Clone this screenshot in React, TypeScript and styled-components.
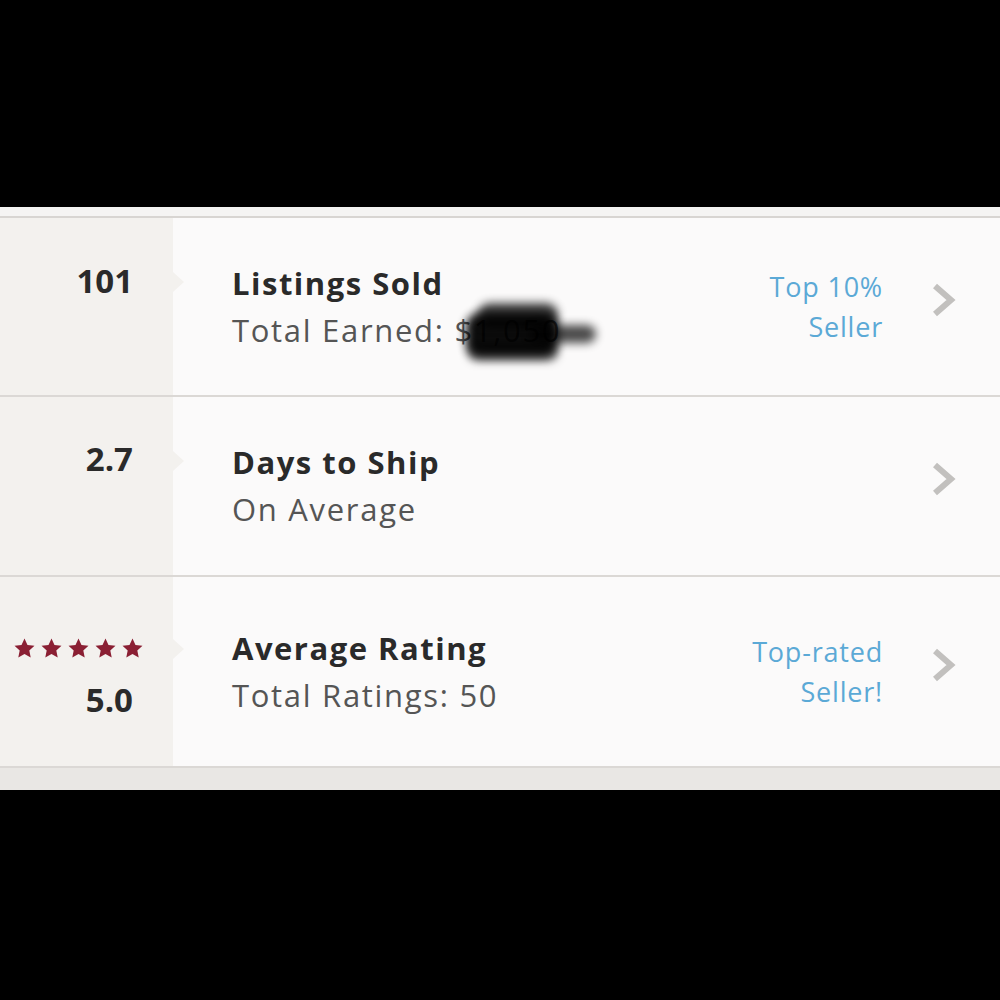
import styled, { createGlobalStyle } from 'styled-components'

const GlobalStyle = createGlobalStyle`
    html, body {
        margin: 0;
        padding: 0;
        background: #000;
    }
    body {
        font-family: "Open Sans", Lato, sans-serif;
    }
`

const Screen = styled.div`
    width: 1000px;
    height: 1000px;
    background: #000;
    display: flex;
    flex-direction: column;
    padding-top: 207px;
    box-sizing: border-box;
`

const TopStrip = styled.div`
    height: 9px;
    background: #f5f4f3;
    border-bottom: 2px solid #d8d5d2;
`

const Row = styled.div<{ $height: number }>`
    display: grid;
    grid-template-columns: 173px 1fr;
    height: ${p => p.$height}px;
    border-bottom: 2px solid #dbd8d5;
`

const StatCell = styled.div<{ $top: number }>`
    position: relative;
    background: #f3f1ee;
    display: flex;
    flex-direction: column;
    align-items: flex-end;
    padding: ${p => p.$top}px 40px 0 0;
`

const Notch = styled.div<{ $top: number }>`
    position: absolute;
    right: -11px;
    top: ${p => p.$top}px;
    width: 0;
    height: 0;
    border-top: 10px solid transparent;
    border-bottom: 10px solid transparent;
    border-left: 11px solid #f3f1ee;
`

const StatValue = styled.div`
    font-size: 33px;
    font-weight: 700;
    line-height: 40px;
    color: #2a2a2a;
`

const Stars = styled.div`
    display: flex;
    gap: 6px;
    margin: 0 -10px 21px 0;
    svg {
        width: 21px;
        height: 21px;
        fill: #8a1f33;
    }
`

const Body = styled.div`
    background: #fbfafa;
    display: flex;
    align-items: center;
    padding: 0 43px 0 59px;
`

const Titles = styled.div`
    flex: 1;
    display: flex;
    flex-direction: column;
`

const Title = styled.div`
    font-size: 31px;
    font-weight: 700;
    line-height: 47px;
    letter-spacing: 1.5px;
    color: #2a2a2a;
`

const Subtitle = styled.div`
    font-size: 31px;
    line-height: 47px;
    letter-spacing: 1.7px;
    color: #555;
`

const Redacted = styled.span`
    position: relative;
`

const Scribble = styled.span<{ $l: number; $t: number; $w: number; $h: number; $o: number }>`
    position: absolute;
    left: ${p => p.$l}px;
    top: ${p => p.$t}px;
    width: ${p => p.$w}px;
    height: ${p => p.$h}px;
    background: #000;
    opacity: ${p => p.$o};
    border-radius: 14px;
    filter: blur(5px);
`

const Badge = styled.div`
    font-size: 27px;
    line-height: 40px;
    letter-spacing: 0.8px;
    color: #5ba9d6;
    text-align: right;
    margin-right: 48px;
`

const Chevron = styled.svg`
    width: 26px;
    height: 34px;
    margin-top: -14px;
    flex-shrink: 0;
`

const BottomStrip = styled.div`
    height: 22px;
    background: #e9e7e4;
`

const Star = () => (
    <svg viewBox="0 0 24 24">
        <path d="M12 .6l3.4 7.3 8 .9-5.9 5.5 1.6 7.9L12 18.2l-7.1 4 1.6-7.9L.6 8.8l8-.9z" />
    </svg>
)

const Arrow = () => (
    <Chevron viewBox="0 0 26 34">
        <polyline points="4,3 20,17 4,31" fill="none" stroke="#c2c0be" strokeWidth="6" />
    </Chevron>
)

const App = () => {
    return (
        <>
            <GlobalStyle />
            <Screen>
                <TopStrip />
                <Row $height={177}>
                    <StatCell $top={43}>
                        <StatValue>101</StatValue>
                        <Notch $top={54} />
                    </StatCell>
                    <Body>
                        <Titles>
                            <Title>Listings Sold</Title>
                            <Subtitle>
                                Total Earned:{' '}
                                <Redacted>
                                    $1,050
                                    <Scribble $l={12} $t={4} $w={92} $h={44} $o={0.95} />
                                    <Scribble $l={24} $t={-6} $w={80} $h={24} $o={0.75} />
                                    <Scribble $l={76} $t={16} $w={66} $h={18} $o={0.7} />
                                    <Scribble $l={14} $t={34} $w={90} $h={18} $o={0.5} />
                                </Redacted>
                            </Subtitle>
                        </Titles>
                        <Badge>Top 10%<br />Seller</Badge>
                        <Arrow />
                    </Body>
                </Row>
                <Row $height={178}>
                    <StatCell $top={42}>
                        <StatValue>2.7</StatValue>
                        <Notch $top={54} />
                    </StatCell>
                    <Body>
                        <Titles>
                            <Title>Days to Ship</Title>
                            <Subtitle>On Average</Subtitle>
                        </Titles>
                        <Arrow />
                    </Body>
                </Row>
                <Row $height={189}>
                    <StatCell $top={61}>
                        <Stars>
                            <Star /><Star /><Star /><Star /><Star />
                        </Stars>
                        <StatValue>5.0</StatValue>
                        <Notch $top={62} />
                    </StatCell>
                    <Body>
                        <Titles>
                            <Title>Average Rating</Title>
                            <Subtitle>Total Ratings: 50</Subtitle>
                        </Titles>
                        <Badge>Top-rated<br />Seller!</Badge>
                        <Arrow />
                    </Body>
                </Row>
                <BottomStrip />
            </Screen>
        </>
    )
}

export default App
